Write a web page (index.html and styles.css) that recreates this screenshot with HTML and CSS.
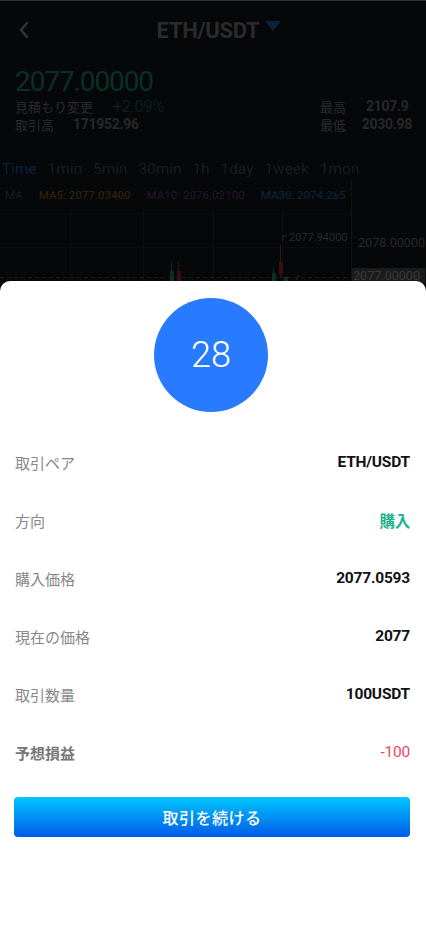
FILE: index.html
```html
<!DOCTYPE html>
<html lang="ja">
<head>
<meta charset="utf-8">
<title>ETH/USDT</title>
<link rel="stylesheet" href="styles.css">
</head>
<body>
<div class="app">
  <header class="topbar">
    <svg class="back" width="12" height="18" viewBox="0 0 12 18"><path d="M9 2 L3 9 L9 16" fill="none" stroke="#363636" stroke-width="2.4" stroke-linecap="round" stroke-linejoin="round"/></svg>
    <div class="title"><span>ETH/USDT</span><svg class="caret" width="16" height="10" viewBox="0 0 16 10"><path d="M0 0 H16 L8 10 Z" fill="#0e2140"/></svg></div>
  </header>

  <section class="ticker">
    <div class="price">2077.00000</div>
    <div class="stats">
      <div class="stats-col">
        <div class="stat"><span class="k k-wide">見積もり変更</span><span class="v up">+2.09%</span></div>
        <div class="stat"><span class="k k-mid">取引高</span><span class="v b">171952.96</span></div>
      </div>
      <div class="stats-col">
        <div class="stat"><span class="k k-short">最高</span><span class="v b">2107.9</span></div>
        <div class="stat"><span class="k k-short">最低</span><span class="v b">2030.98</span></div>
      </div>
    </div>
  </section>

  <nav class="tabs">
    <span class="tab active">Time</span>
    <span class="tab">1min</span>
    <span class="tab">5min</span>
    <span class="tab">30min</span>
    <span class="tab">1h</span>
    <span class="tab">1day</span>
    <span class="tab">1week</span>
    <span class="tab">1mon</span>
  </nav>

  <section class="chart">
    <div class="plot-col">
      <div class="ma">
        <span class="ma-k">MA</span>
        <span class="ma5">MA5: 2077.03400</span>
        <span class="ma10">MA10: 2076.02100</span>
        <span class="ma30">MA30: 2074.265</span>
      </div>
      <svg class="plot" width="351" height="80" viewBox="0 0 351 80">
        <g stroke="#0c0d10" stroke-width="1">
          <line x1="70.5" y1="0" x2="70.5" y2="80"/>
          <line x1="143.5" y1="0" x2="143.5" y2="80"/>
          <line x1="213.5" y1="0" x2="213.5" y2="80"/>
          <line x1="282.5" y1="0" x2="282.5" y2="80"/>
          <line x1="0" y1="5.5" x2="351" y2="5.5"/>
          <line x1="0" y1="39.5" x2="351" y2="39.5"/>
        </g>
        <line x1="0" y1="69.5" x2="351" y2="69.5" stroke="#1c1c1e" stroke-dasharray="4 3"/>
        <g>
          <line x1="171.5" y1="54" x2="171.5" y2="80" stroke="#0a3026"/>
          <rect x="170" y="63" width="4" height="17" fill="#0a3026"/>
          <line x1="178.5" y1="54" x2="178.5" y2="80" stroke="#3a0f12"/>
          <rect x="177" y="63" width="4" height="17" fill="#3a0f12"/>
          <line x1="273.5" y1="59" x2="273.5" y2="80" stroke="#0a3026"/>
          <rect x="272" y="65" width="4" height="15" fill="#0a3026"/>
          <line x1="280.5" y1="37" x2="280.5" y2="70" stroke="#3a0f12"/>
          <rect x="279" y="54" width="4" height="12" fill="#3a0f12"/>
          <rect x="284" y="69" width="4" height="11" fill="#0a3026"/>
          <path d="M296 72 L299 67" stroke="#3a2a08" fill="none"/>
          <path d="M287 28 H283 V33" stroke="#2c2c2c" fill="none"/>
          <text x="289" y="30" class="hi-label">2077.94000</text>
        </g>
      </svg>
    </div>
    <div class="axis">
      <span class="axis-label">2078.00000</span>
      <span class="axis-box">2077.00000</span>
    </div>
  </section>
</div>

<div class="sheet">
  <div class="countdown">28</div>
  <ul class="rows">
    <li class="row"><span class="label">取引ペア</span><span class="value">ETH/USDT</span></li>
    <li class="row"><span class="label">方向</span><span class="value buy">購入</span></li>
    <li class="row"><span class="label">購入価格</span><span class="value">2077.0593</span></li>
    <li class="row"><span class="label">現在の価格</span><span class="value">2077</span></li>
    <li class="row"><span class="label">取引数量</span><span class="value">100USDT</span></li>
    <li class="row"><span class="label strong">予想損益</span><span class="value loss">-100</span></li>
  </ul>
  <button class="cta" type="button">取引を続ける</button>
</div>
</body>
</html>
```

FILE: styles.css
```css
* { box-sizing: border-box; }
html, body { margin: 0; padding: 0; }
body {
  background: #060709;
  width: 426px;
  height: 931px;
  overflow: hidden;
  font-family: Roboto, "Noto Sans CJK JP", sans-serif;
}

.app {
  border-top: 1px solid #343434;
  height: 931px;
}

.topbar {
  height: 60px;
  display: flex;
  align-items: center;
  position: relative;
  padding-left: 18px;
}
.back { display: block; margin-top: -2px; }
.title {
  flex: 1;
  display: flex;
  align-items: center;
  justify-content: center;
  gap: 6px;
  padding-right: 18px;
  margin-top: -2px;
  color: #2b2b2b;
  font-weight: 700;
  font-size: 22px;
  letter-spacing: -0.3px;
}
.caret { margin-top: -8px; }

.ticker { padding: 0 15px 0 15px; }
.price {
  color: #0a3024;
  font-size: 28px;
  line-height: 32px;
  letter-spacing: -1.1px;
  height: 32px;
  margin-top: 5px;
}
.stats {
  display: flex;
  justify-content: space-between;
  margin-top: -1px;
}
.stats-col { display: flex; flex-direction: column; }
.stats-col:last-child { width: 92px; margin-right: -1px; }
.stat {
  display: flex;
  align-items: center;
  height: 18px;
  font-size: 13px;
  color: #2a2a2a;
}
.k { font-family: "Noto Sans CJK JP", sans-serif; color: #2a2a2a; }
.k-wide { width: 98px; }
.k-mid { width: 58px; }
.k-short { width: 46px; }
.v { font-size: 14px; }
.v.b { font-weight: 700; color: #282828; letter-spacing: -0.3px; }
.v.up { color: #0a2d21; font-size: 16px; font-weight: 300; }

.tabs {
  display: flex;
  gap: 11px;
  margin-top: 23px;
  padding-left: 2px;
  height: 26px;
  align-items: center;
  font-size: 15.4px;
  color: #1b1c1e;
  white-space: nowrap;
}
.tab.active { color: #0a2140; }

.chart { display: flex; }
.plot-col { width: 352px; border-right: 1px solid #121317; }
.ma {
  height: 26px;
  display: flex;
  align-items: center;
  gap: 16px;
  padding-left: 5px;
  font-size: 11.6px;
  white-space: nowrap;
  overflow: hidden;
  color: #1d1d1f;
}
.ma5 { color: #362606; }
.ma10 { color: #271630; }
.ma30 { color: #0b273e; }
.plot { display: block; }
.hi-label { font-family: Roboto, sans-serif; font-size: 11px; fill: #2a2a2a; dominant-baseline: middle; }

.axis {
  display: flex;
  flex-direction: column;
  padding-top: 54px;
  font-size: 12.6px;
  white-space: nowrap;
}
.axis-label { color: #282828; padding-left: 6px; height: 32px; line-height: 14px; }
.axis-box {
  background: #1b1b1b;
  color: #3a3a3a;
  padding: 0 0 0 1px;
  line-height: 15px;
  height: 16px;
}

.sheet {
  position: fixed;
  left: 0;
  right: 0;
  top: 281px;
  bottom: 0;
  background: #fff;
  border-radius: 10px 10px 0 0;
  padding: 17px 16px 0 14px;
  display: flex;
  flex-direction: column;
  align-items: stretch;
}
.countdown {
  align-self: center;
  width: 114px;
  height: 114px;
  border-radius: 50%;
  background: #287bff;
  color: #fff;
  display: flex;
  align-items: center;
  justify-content: center;
  font-size: 36px;
  font-weight: 300;
  margin-left: -2px;
}
.rows {
  list-style: none;
  margin: 21px 0 0 0;
  padding: 0;
}
.row {
  height: 58px;
  display: flex;
  align-items: center;
  justify-content: space-between;
  padding-left: 1px;
}
.label {
  font-family: "Noto Sans CJK JP", sans-serif;
  font-size: 15px;
  color: #888;
}
.label.strong { font-weight: 700; color: #777; }
.value {
  font-size: 15.5px;
  font-weight: 700;
  color: #111;
  letter-spacing: -0.2px;
}
.value.buy { color: #21b48c; font-family: "Noto Sans CJK JP", sans-serif; }
.value.loss { color: #f0465a; font-weight: 400; }

.cta {
  margin-top: 16px;
  height: 40px;
  width: 100%;
  border: 0;
  border-radius: 4px;
  background: linear-gradient(180deg, #00c7ff 0%, #005ae8 100%);
  color: #fff;
  font-family: "Noto Sans CJK JP", sans-serif;
  font-size: 16px;
  font-weight: 500;
  letter-spacing: 0.5px;
}
```
